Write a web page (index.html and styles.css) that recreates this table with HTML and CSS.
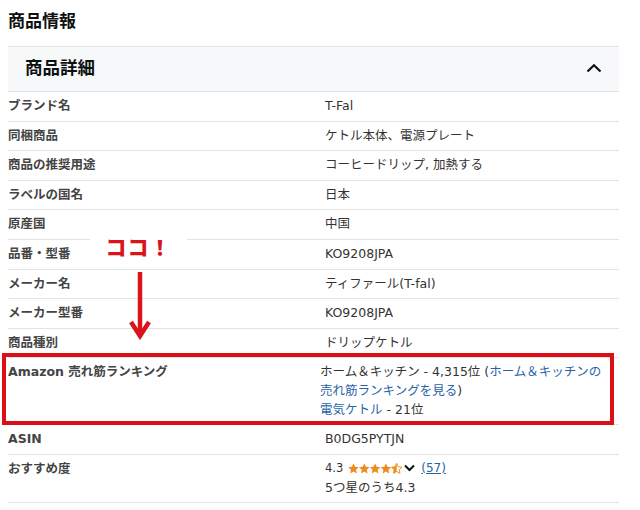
FILE: index.html
```html
<!DOCTYPE html>
<html lang="ja">
<head>
<meta charset="utf-8">
<link rel="stylesheet" href="styles.css">
</head>
<body>
<div class="page">
  <h2 class="title">商品情報</h2>
  <section class="panel">
    <div class="panel-head">
      <h3 class="panel-title">商品詳細</h3>
      <svg class="caret" width="16" height="10" viewBox="0 0 16 10"><path d="M1.5 8.5L8 2.2l6.5 6.3" fill="none" stroke="#0f1111" stroke-width="2.2"/></svg>
    </div>
    <div class="spec">
      <div class="row"><div class="k">ブランド名</div><div class="v">T-Fal</div></div>
      <div class="row"><div class="k">同梱商品</div><div class="v">ケトル本体、電源プレート</div></div>
      <div class="row"><div class="k">商品の推奨用途</div><div class="v">コーヒードリップ, 加熱する</div></div>
      <div class="row"><div class="k">ラベルの国名</div><div class="v">日本</div></div>
      <div class="row"><div class="k">原産国</div><div class="v">中国</div></div>
      <div class="row"><div class="k">品番・型番</div><div class="v">KO9208JPA</div></div>
      <div class="row"><div class="k">メーカー名</div><div class="v">ティファール(T-fal)</div></div>
      <div class="row"><div class="k">メーカー型番</div><div class="v">KO9208JPA</div></div>
      <div class="row"><div class="k">商品種別</div><div class="v">ドリップケトル</div></div>
      <div class="row row-rank">
        <div class="k">Amazon 売れ筋ランキング</div>
        <div class="v v-rank">ホーム＆キッチン - 4,315位 (<a class="link" href="#">ホーム＆キッチンの<br>売れ筋ランキングを見る</a>)<br><a class="link" href="#">電気ケトル</a> - 21位</div>
        <div class="highlight"></div>
      </div>
      <div class="row"><div class="k">ASIN</div><div class="v">B0DG5PYTJN</div></div>
      <div class="row"><div class="k">おすすめ度</div>
        <div class="v">
          <div class="rating">
            <span class="score">4.3</span>
            <svg class="stars" width="54" height="11" viewBox="0 0 54 11">
              <defs>
                <path id="st" d="M5.5 0.4l1.55 3.4 3.7.4-2.75 2.5.8 3.7-3.3-1.9-3.3 1.9.8-3.7L.25 4.2l3.7-.4z"/>
                <clipPath id="half"><rect x="0" y="0" width="5.5" height="11"/></clipPath>
              </defs>
              <use href="#st" x="0" fill="#f08a1c"/>
              <use href="#st" x="10.8" fill="#f08a1c"/>
              <use href="#st" x="21.6" fill="#f08a1c"/>
              <use href="#st" x="32.4" fill="#f08a1c"/>
              <g transform="translate(43.2 0)">
                <path d="M5.5 0.4l1.55 3.4 3.7.4-2.75 2.5.8 3.7-3.3-1.9-3.3 1.9.8-3.7L.25 4.2l3.7-.4z" fill="none" stroke="#f08a1c" stroke-width="0.9"/>
                <path d="M5.5 0.4l1.55 3.4 3.7.4-2.75 2.5.8 3.7-3.3-1.9-3.3 1.9.8-3.7L.25 4.2l3.7-.4z" fill="#f08a1c" clip-path="url(#half)"/>
              </g>
            </svg>
            <svg class="dd" width="11" height="8" viewBox="0 0 11 8"><path d="M1 1.5l4.5 4.5L10 1.5" fill="none" stroke="#0f1111" stroke-width="2"/></svg>
            <a class="link count" href="#">(57)</a>
          </div>
          <div>5つ星のうち4.3</div>
        </div>
      </div>
    </div>
    <div class="callout">ココ！</div>
    <svg class="arrow" width="24" height="70" viewBox="0 0 24 70"><path d="M12 2V66" stroke="#d9141b" stroke-width="4.5"/><path d="M3 52l9 14 9-14" fill="none" stroke="#d9141b" stroke-width="4.5" stroke-linejoin="miter"/></svg>
  </section>
</div>
</body>
</html>
```

FILE: styles.css
```css
html, body {
  margin: 0;
  padding: 0;
  background: #fff;
}
body {
  padding: 8px;
  font-family: "DejaVu Sans", "Noto Sans CJK JP", sans-serif;
  color: #333;
}
.page {
  width: 611px;
}
.title {
  margin: 0 0 14px;
  font-family: "Noto Sans CJK JP", sans-serif;
  font-size: 17px;
  line-height: 24px;
  font-weight: 700;
  color: #0f1111;
}
.panel {
  position: relative;
}
.panel-head {
  display: flex;
  align-items: center;
  justify-content: space-between;
  height: 44px;
  padding: 0 17px;
  background: #f7f8f9;
  border-top: 1px solid #e3e6e6;
  border-bottom: 1px solid #dfe2e2;
}
.panel-title {
  margin: 0 0 5px;
  font-family: "Noto Sans CJK JP", sans-serif;
  font-size: 17.5px;
  font-weight: 700;
  color: #0f1111;
}
.caret {
  display: block;
  margin-bottom: 2px;
}
.spec {
  display: flex;
  flex-direction: column;
}
.row {
  display: grid;
  grid-template-columns: 317px 1fr;
  padding: 5px 0;
  border-bottom: 1px solid #e3e3e3;
  font-size: 12.5px;
  line-height: 18.6px;
}
.k {
  font-weight: 700;
  color: #444;
}
.v {
  color: #333;
}
.row-rank {
  position: relative;
}
.v-rank {
  margin-left: -5px;
}
.link {
  color: #2a64a6;
  text-decoration: none;
}
.highlight {
  position: absolute;
  top: -5px;
  bottom: -1px;
  left: -6px;
  right: 5px;
  border: 4px solid #dc0e16;
}
.rating {
  display: flex;
  align-items: center;
  height: 21px;
  margin-top: -2px;
  font-size: 11.5px;
}
.score {
  margin-right: 5px;
}
.stars {
  display: block;
}
.dd {
  display: block;
  margin-left: 2px;
  margin-right: 6px;
}
.count {
  text-decoration: underline;
  font-size: 12px;
}
.callout {
  position: absolute;
  left: 82px;
  top: 185px;
  width: 97px;
  height: 31px;
  background: #fff;
  color: #d9141b;
  font-family: "Noto Sans CJK JP", sans-serif;
  font-weight: 900;
  font-size: 21px;
  line-height: 31px;
  text-align: center;
  letter-spacing: 1px;
}
.arrow {
  position: absolute;
  left: 120px;
  top: 224px;
  display: block;
}
```
